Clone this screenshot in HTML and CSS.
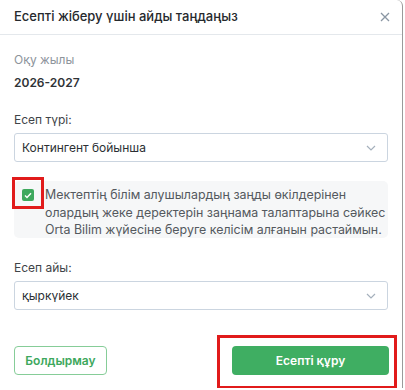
FILE: index.html
```html
<!DOCTYPE html>
<html lang="kk">
<head>
<meta charset="utf-8">
<link rel="stylesheet" href="styles.css">
</head>
<body>
<div class="modal">
  <div class="modal-header">
    <span class="modal-title">Есепті жіберу үшін айды таңдаңыз</span>
    <svg class="close" width="10" height="10" viewBox="0 0 10 10"><path d="M1 1L9 9M9 1L1 9" stroke="#8a96a3" stroke-width="1.3" fill="none"/></svg>
  </div>
  <div class="modal-body">
    <div class="muted-label">Оқу жылы</div>
    <div class="year">2026-2027</div>

    <div class="field-label first">Есеп түрі:</div>
    <div class="select">
      <span>Контингент бойынша</span>
      <svg class="chev" width="10" height="6" viewBox="0 0 10 6"><path d="M1 1L5 5L9 1" stroke="#a5b0bc" stroke-width="1.2" fill="none"/></svg>
    </div>

    <div class="consent">
      <span class="checkbox">
        <svg width="8" height="7" viewBox="0 0 8 7"><path d="M1 3.5L3 5.5L7 1.2" stroke="#fff" stroke-width="1.4" fill="none"/></svg>
      </span>
      <p class="consent-text">Мектептің білім алушылардың заңды өкілдерінен<br>олардың жеке деректерін заңнама талаптарына сәйкес<br>Orta Bilim жүйесіне беруге келісім алғанын растаймын.</p>
      <span class="mark mark-check"></span>
    </div>

    <div class="field-label">Есеп айы:</div>
    <div class="select">
      <span>қыркүйек</span>
      <svg class="chev" width="10" height="6" viewBox="0 0 10 6"><path d="M1 1L5 5L9 1" stroke="#a5b0bc" stroke-width="1.2" fill="none"/></svg>
    </div>

    <div class="footer">
      <button class="btn btn-outline">Болдырмау</button>
      <div class="primary-wrap">
        <button class="btn btn-primary">Есепті құру</button>
        <span class="mark mark-btn"></span>
      </div>
    </div>
  </div>
</div>
</body>
</html>
```
FILE: styles.css
```css
* { box-sizing: border-box; }
html, body { margin: 0; padding: 0; background: #fff; }
body { font-family: Inter, "Noto Sans", sans-serif; color: #333; }

.modal {
  width: 403px;
  height: 388px;
  background: #fff;
  border-right: 1px solid #9a9a9a;
  border-top-right-radius: 6px;
}

.modal-header {
  height: 35px;
  display: flex;
  align-items: center;
  justify-content: space-between;
  padding: 0 12px 2px 14px;
  border-bottom: 1px solid #e4e8ec;
}
.modal-title { font-size: 13px; font-weight: 500; color: #26292d; }
.close { display: block; margin-top: 1px; }

.modal-body { padding: 17px 14px 0 14px; }

.muted-label { font-size: 12px; line-height: 16px; color: #8d949b; }
.year { font-size: 12px; line-height: 16px; font-weight: 600; color: #2f3337; margin-top: 7px; }

.field-label { font-size: 12px; line-height: 16px; color: #3f4448; margin-top: 22px; }
.field-label.first { margin-top: 21px; }

.select {
  margin-top: 5px;
  height: 29px;
  width: 374px;
  border: 1px solid #cbd5e0;
  border-radius: 3px;
  display: flex;
  align-items: center;
  justify-content: space-between;
  padding: 0 11px 0 7px;
  font-size: 12px;
  color: #2b2f33;
}
.chev { display: block; }

.consent {
  position: relative;
  margin-top: 19px;
  width: 374px;
  height: 57px;
  background: #f6f7f8;
  border-radius: 5px;
  padding: 5px 4px 4px 8px;
  display: flex;
  gap: 11px;
  align-items: flex-start;
}
.checkbox {
  flex: none;
  width: 12px;
  height: 12px;
  margin-top: 3px;
  background: #3ea85d;
  border-radius: 2px;
  display: flex;
  align-items: center;
  justify-content: center;
}
.consent-text {
  margin: 0;
  font-size: 12.4px;
  line-height: 17.5px;
  color: #54595e;
  white-space: nowrap;
}

.mark { position: absolute; border: 3px solid #e11b1b; pointer-events: none; }
.mark-check { left: -2px; top: -4px; width: 32px; height: 32px; }

.footer {
  margin-top: 36px;
  display: flex;
  justify-content: space-between;
  align-items: center;
  width: 375px;
}
.btn {
  font-family: Inter, "Noto Sans", sans-serif;
  height: 29px;
  border-radius: 4px;
  font-size: 12px;
  font-weight: 600;
  cursor: pointer;
}
.btn-outline {
  width: 93px;
  background: #fff;
  border: 1px solid #86cd98;
  color: #3ea85d;
}
.primary-wrap { position: relative; }
.btn-primary {
  display: block;
  width: 157px;
  background: #3fae62;
  border: none;
  color: #fff;
}
.mark-btn { left: -15px; top: -11px; width: 180px; height: 54px; }
```
